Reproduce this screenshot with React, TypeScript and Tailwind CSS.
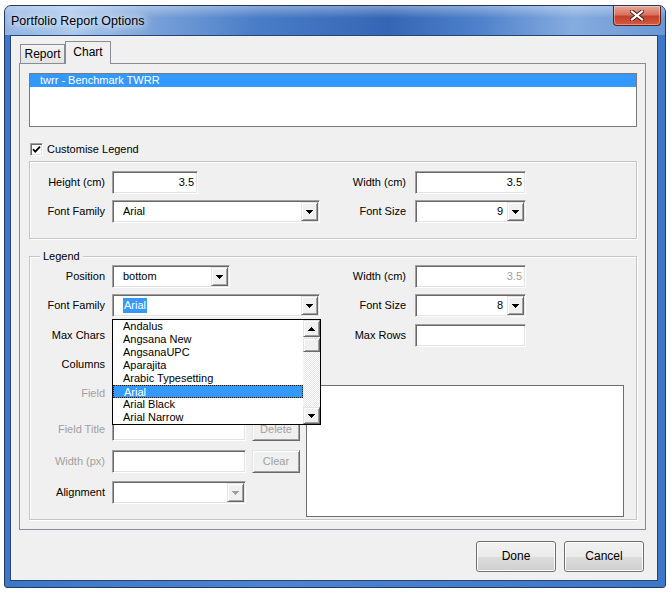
import React from "react";

const SUNKEN =
  "border border-t-[#a0a0a0] border-l-[#a0a0a0] border-r-white border-b-white shadow-[inset_1px_1px_0_#696969,inset_-1px_-1px_0_#e3e3e3] p-[1px]";
const RAISED =
  "border border-t-[#e3e3e3] border-l-[#e3e3e3] border-r-[#696969] border-b-[#696969] shadow-[inset_1px_1px_0_#fff,inset_-1px_-1px_0_#a0a0a0] bg-[#f0f0f0]";

function Arrow({ up = false, color = "#000" }: { up?: boolean; color?: string }) {
  return (
    <svg width="7" height="4" viewBox="0 0 7 4" shapeRendering="crispEdges" className={up ? "rotate-180" : ""}>
      <path d="M0 0h7v1H0zM1 1h5v1H1zM2 2h3v1H2zM3 3h1v1H3z" fill={color} />
    </svg>
  );
}

function Label({ children, dim = false, className = "w-[75px]" }: { children: React.ReactNode; dim?: boolean; className?: string }) {
  return <div className={`${className} shrink-0 text-right ${dim ? "text-[#a0a0a0]" : "text-black"}`}>{children}</div>;
}

function TextBox({ value = "", dim = false, className }: { value?: string; dim?: boolean; className: string }) {
  return (
    <div className={`${SUNKEN} ${className} h-[23px] bg-white flex items-center justify-end pr-[3px] ${dim ? "text-[#a0a0a0]" : ""}`}>
      {value}
    </div>
  );
}

function Combo({
  value = "",
  className,
  right = false,
  highlight = false,
  disabled = false,
  children,
}: {
  value?: string;
  className: string;
  right?: boolean;
  highlight?: boolean;
  disabled?: boolean;
  children?: React.ReactNode;
}) {
  return (
    <div className={`${SUNKEN} ${className} h-[23px] bg-white flex relative`}>
      <div className={`flex-1 flex items-center ${right ? "justify-end pr-[4px]" : "pl-[9px]"}`}>
        {highlight ? <span className="bg-[#3399ff] text-white px-[1px] leading-[15px]">{value}</span> : value}
      </div>
      <div className={`${RAISED} w-[17px] h-[19px] flex items-center justify-center`}>
        <Arrow color={disabled ? "#a0a0a0" : "#000"} />
      </div>
      {children}
    </div>
  );
}

function SmallButton({ children }: { children: React.ReactNode }) {
  return (
    <div className={`${RAISED} w-[48px] h-[23px] ml-[6px] flex items-center justify-center text-[#a0a0a0]`}>{children}</div>
  );
}

const fonts = ["Andalus", "Angsana New", "AngsanaUPC", "Aparajita", "Arabic Typesetting", "Arial", "Arial Black", "Arial Narrow"];

function FontList() {
  return (
    <div className="absolute left-[-1px] top-[24px] w-[209px] h-[106px] border border-black bg-white flex z-20">
      <div className="flex-1 flex flex-col">
        {fonts.map((f) => (
          <div
            key={f}
            className={`h-[13px] leading-[13px] pl-[10px] ${
              f === "Arial" ? "bg-[#3399ff] text-white border border-dotted border-[#1a1a1a] pl-[9px] leading-[11px]" : ""
            }`}
          >
            {f}
          </div>
        ))}
      </div>
      {/* scrollbar */}
      <div className="w-[17px] flex flex-col bg-[repeating-conic-gradient(#ffffff_0_25%,#e6e6e6_0_50%)] bg-[length:2px_2px]">
        <div className={`${RAISED} h-[17px] flex items-center justify-center`}>
          <Arrow up />
        </div>
        <div className={`${RAISED} h-[14px] mt-[1px]`} />
        <div className="flex-1" />
        <div className={`${RAISED} h-[17px] flex items-center justify-center`}>
          <Arrow />
        </div>
      </div>
    </div>
  );
}

function GroupBox({ className, title, children }: { className: string; title?: string; children: React.ReactNode }) {
  return (
    <div className={`relative border border-[#c5c5c5] shadow-[inset_1px_1px_0_#fff,1px_1px_0_#fff] ${className}`}>
      {title && <div className="absolute -top-[8px] left-[10px] bg-[#f0f0f0] px-[3px] leading-[14px]">{title}</div>}
      {children}
    </div>
  );
}

function RightPair({ label, children }: { label: string; children: React.ReactNode }) {
  return (
    <>
      <Label className="w-[71px]">{label}</Label>
      <div className="ml-[9px]">{children}</div>
    </>
  );
}

export default function App() {
  return (
    <div className="w-[672px] h-[593px] bg-white pl-[4px] pt-[5px] font-['Liberation_Sans',Arial,sans-serif] text-[11px] leading-[13px] text-black">
      <div className="w-[662px] h-[583px] rounded-t-[7px] rounded-b-[3px] border border-[#233a5e] overflow-hidden flex flex-col bg-[linear-gradient(180deg,#4f82cc,#3f76c6)]">
        {/* title bar */}
        <div className="h-[29px] shrink-0 relative flex items-center pl-[4px] bg-[linear-gradient(90deg,#8fb3e3_0%,#a9c6ec_10%,#7aa2da_22%,#4a7dc7_38%,#3466b5_58%,#4f82cb_72%,#86acdf_86%,#6a97d4_100%)]">
          <div className="absolute inset-x-0 top-0 h-[12px] bg-[linear-gradient(180deg,rgba(255,255,255,0.35),rgba(255,255,255,0))]" />
          <span className="relative text-[12.5px] leading-[16px] text-black px-[2px] [text-shadow:0_0_6px_#e8f0fb,0_0_10px_#e8f0fb,0_0_14px_#dbe7f7]">
            Portfolio Report Options
          </span>
          <div className="absolute right-[4px] top-0 w-[48px] h-[20px] rounded-b-[4px] border border-t-0 border-[#5c2219] bg-[linear-gradient(180deg,#e8a698_0%,#d9735f_45%,#c4412c_55%,#d45a3f_100%)] shadow-[inset_0_0_0_1px_rgba(255,255,255,0.35)] flex items-center justify-center">
            <svg width="14" height="11" viewBox="0 0 14 11">
              <path d="M2 1.5 L12 9.5 M12 1.5 L2 9.5" stroke="#4a1c16" strokeWidth="4" strokeLinecap="square" />
              <path d="M2 1.5 L12 9.5 M12 1.5 L2 9.5" stroke="#ffffff" strokeWidth="2.2" strokeLinecap="square" />
            </svg>
          </div>
        </div>

        {/* window body */}
        <div className="flex-1 pl-[5px] pr-[7px] pb-[6px] bg-[linear-gradient(90deg,#3e76c8,#4d83d0_40%,#3e76c8)]">
          <div className="h-full border border-[#26466f] bg-[#f0f0f0] flex flex-col">
            <div className="ml-[8px] mt-[5px] w-[627px]">
              {/* tabs */}
              <div className="flex items-end h-[22px]">
                <div className="ml-[1px] w-[45px] h-[19px] border border-b-0 border-[#898c95] bg-[linear-gradient(180deg,#f3f3f3,#e3e3e3)] text-[12px] flex items-center justify-center">
                  Report
                </div>
                <div className="relative z-10 -mb-[1px] w-[46px] h-[23px] border border-b-0 border-[#898c95] bg-[#f0f0f0] text-[12px] flex items-center justify-center pb-[2px]">
                  Chart
                </div>
              </div>

              {/* tab page */}
              <div className="h-[467px] border border-[#898c95] bg-[#f0f0f0] pl-[9px] pr-[8px] pt-[9px]">
                <div className="h-[54px] border border-[#7a7a7a] bg-white">
                  <div className="h-[13px] bg-[#3399ff] text-white pl-[10px]">twrr - Benchmark TWRR</div>
                </div>

                <div className="mt-[16px] h-[13px] flex items-center">
                  <div className={`${SUNKEN} p-0 ml-[1px] w-[13px] h-[13px] bg-white flex items-center justify-center`}>
                    <svg width="9" height="9" viewBox="0 0 9 9">
                      <path d="M1 4.2 L3.3 6.6 L8 1.6" stroke="#000" strokeWidth="1.8" fill="none" />
                    </svg>
                  </div>
                  <span className="ml-[4px]">Customise Legend</span>
                </div>

                <GroupBox className="mt-[5px] h-[78px] pt-[9px]">
                  <div className="flex items-center h-[23px]">
                    <div className="w-[305px] flex items-center">
                      <Label>Height (cm)</Label>
                      <TextBox value="3.5" className="ml-[7px] w-[86px]" />
                    </div>
                    <RightPair label="Width (cm)">
                      <TextBox value="3.5" className="w-[111px]" />
                    </RightPair>
                  </div>
                  <div className="flex items-center h-[23px] mt-[6px]">
                    <div className="w-[305px] flex items-center">
                      <Label>Font Family</Label>
                      <Combo value="Arial" className="ml-[7px] w-[208px]" />
                    </div>
                    <RightPair label="Font Size">
                      <Combo value="9" right className="w-[111px]" />
                    </RightPair>
                  </div>
                </GroupBox>

                <GroupBox title="Legend" className="mt-[17px] h-[264px] pt-[8px]">
                  <div className="flex items-center h-[23px]">
                    <div className="w-[305px] flex items-center">
                      <Label>Position</Label>
                      <Combo value="bottom" className="ml-[7px] w-[118px]" />
                    </div>
                    <RightPair label="Width (cm)">
                      <TextBox value="3.5" dim className="w-[111px]" />
                    </RightPair>
                  </div>
                  <div className="flex items-center h-[23px] mt-[6px] relative z-20">
                    <div className="w-[305px] flex items-center">
                      <Label>Font Family</Label>
                      <Combo value="Arial" highlight className="ml-[7px] w-[208px]">
                        <FontList />
                      </Combo>
                    </div>
                    <RightPair label="Font Size">
                      <Combo value="8" right className="w-[111px]" />
                    </RightPair>
                  </div>
                  <div className="flex items-center h-[23px] mt-[7px]">
                    <div className="w-[305px] flex items-center">
                      <Label>Max Chars</Label>
                      <TextBox className="ml-[7px] w-[86px]" />
                    </div>
                    <RightPair label="Max Rows">
                      <TextBox className="w-[111px]" />
                    </RightPair>
                  </div>

                  <div className="flex mt-[6px]">
                    <div className="w-[270px] flex flex-col">
                      <div className="flex items-center h-[23px]">
                        <Label>Columns</Label>
                        <Combo className="ml-[7px] w-[134px]" />
                      </div>
                      <div className="flex items-center h-[23px] mt-[6px]">
                        <Label dim>Field</Label>
                        <Combo className="ml-[7px] w-[134px]" disabled />
                        <SmallButton>Add</SmallButton>
                      </div>
                      <div className="flex items-center h-[23px] mt-[13px]">
                        <Label dim>Field Title</Label>
                        <TextBox className="ml-[7px] w-[134px]" />
                        <SmallButton>Delete</SmallButton>
                      </div>
                      <div className="flex items-center h-[23px] mt-[9px]">
                        <Label dim>Width (px)</Label>
                        <TextBox className="ml-[7px] w-[134px]" />
                        <SmallButton>Clear</SmallButton>
                      </div>
                      <div className="flex items-center h-[23px] mt-[8px]">
                        <Label>Alignment</Label>
                        <Combo className="ml-[7px] w-[134px]" disabled />
                      </div>
                    </div>
                    <div className="ml-[6px] mt-[32px] w-[318px] h-[132px] border border-[#6e6e6e] bg-white" />
                  </div>
                </GroupBox>
              </div>
            </div>

            {/* buttons */}
            <div className="flex justify-end gap-[8px] mt-[11px] mr-[13px]">
              {["Done", "Cancel"].map((b) => (
                <div
                  key={b}
                  className="w-[80px] h-[31px] rounded-[3px] border border-[#707070] bg-[linear-gradient(180deg,#f2f2f2_0%,#ebebeb_50%,#dddddd_50%,#cfcfcf_100%)] shadow-[inset_0_0_0_1px_#fcfcfc] text-[12px] flex items-center justify-center"
                >
                  {b}
                </div>
              ))}
            </div>
          </div>
        </div>
      </div>
    </div>
  );
}
